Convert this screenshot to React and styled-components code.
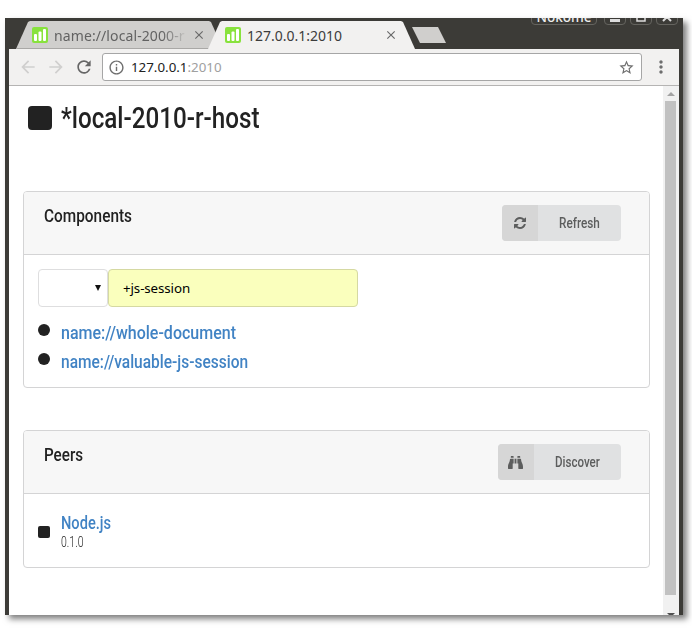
import React from 'react';
import styled, { createGlobalStyle } from 'styled-components';
import { MdArrowBack, MdArrowForward, MdRefresh, MdInfoOutline, MdStarBorder, MdMoreVert, MdClose } from 'react-icons/md';
import { FaBinoculars } from 'react-icons/fa';

const GlobalStyle = createGlobalStyle`
  * { box-sizing: border-box; }
  body { margin: 0; background: #fff; overflow: hidden; }
`;

const Page = styled.div`
  width: 692px;
  height: 637px;
  padding: 18px 9px 22px 5px;
  font-family: Roboto, sans-serif;
  color: #222;
`;

const Window = styled.div`
  height: 597px;
  display: flex;
  flex-direction: column;
  background: #3c3b37;
  border: solid #3c3b37;
  border-width: 0 4px;
  box-shadow: 4px 4px 6px rgba(0, 0, 0, 0.5);
`;

const TitleBar = styled.div`
  height: 31px;
  flex: none;
  display: flex;
  align-items: flex-start;
  overflow: hidden;
`;

const Tab = styled.div`
  width: 207px;
  height: 28px;
  flex: none;
  margin: 3px 0 0 ${(p) => (p.$active ? '-15px' : '7px')};
  padding: 0 17px 0 ${(p) => (p.$active ? '17px' : '16px')};
  display: flex;
  align-items: center;
  background: ${(p) => (p.$active ? '#f2f1f0' : '#d0cfcd')};
  box-shadow: ${(p) => (p.$active ? 'none' : 'inset 0 -1px #a9a8a6')};
  clip-path: polygon(0 100%, 12px 1px, 14px 0, 193px 0, 195px 1px, 100% 100%);
  font: 14px 'Noto Sans', sans-serif;
  color: ${(p) => (p.$active ? '#3c3c3c' : '#626262')};
`;

const TabTitle = styled.span`
  width: 135px;
  margin-left: 6px;
  letter-spacing: ${(p) => p.$spacing || '0'};
  white-space: nowrap;
  mask-image: ${(p) => (p.$fade ? 'linear-gradient(90deg, #000 108px, transparent 134px)' : 'none')};
`;

const CloseIcon = styled(MdClose)`
  flex: none;
  width: 14px;
  height: 14px;
  margin-left: auto;
  color: #6a6a6a;
`;

const NewTab = styled.div`
  width: 34px;
  height: 16px;
  margin: 9px 0 0 -3px;
  background: #d0cfcd;
  clip-path: polygon(0 0, 26px 0, 100% 100%, 8px 100%);
`;

const Controls = styled.div`
  margin-left: auto;
  display: flex;
  gap: 4px;
  padding-right: 1px;
`;

const Control = styled.div`
  width: ${(p) => p.$w || 22}px;
  margin-right: ${(p) => (p.$w ? 3 : 0)}px;
  height: 20px;
  margin-top: -13px;
  display: flex;
  justify-content: center;
  align-items: flex-end;
  border: 1px solid #65645f;
  border-radius: 4px;
  color: #eee;
  font: 500 13.5px/13px 'Noto Sans', sans-serif;
`;

const Toolbar = styled.div`
  height: 37px;
  flex: none;
  display: flex;
  align-items: center;
  background: #f2f1f0;
  border-bottom: 1px solid #b5b4b3;
  padding: 0 8px 0 9px;
  svg { flex: none; }
`;

const NavIcon = styled.span`
  display: flex;
  width: 20px;
  margin-right: 8px;
  color: ${(p) => (p.$disabled ? '#d0cfce' : '#666')};
`;

const AddressBar = styled.div`
  width: 540px;
  height: 28px;
  display: flex;
  align-items: center;
  padding: 0 6px 0 5px;
  background: #fff;
  border: 1px solid #a6a6a6;
  border-radius: 3px;
  color: #6e6e6e;
  font: 13.33px 'Noto Sans', sans-serif;
`;

const Url = styled.span`
  flex: 1;
  margin-left: 6px;
  color: #a0a0a0;
  b { font-weight: 400; color: #222; }
`;

const MenuIcon = styled(MdMoreVert)`
  width: 20px;
  height: 20px;
  margin-left: 9px;
  color: #6e6e6e;
`;

const Viewport = styled.div`
  flex: 1;
  min-height: 0;
  display: flex;
  background: #fff;
`;

const Content = styled.main`
  flex: 1;
  padding: 19px 13px 0 14px;
`;

const Scrollbar = styled.div`
  width: 16px;
  display: flex;
  flex-direction: column;
  align-items: center;
  background: #f1f1f1;
  overflow: hidden;
`;

const Arrow = styled.div`
  flex: none;
  width: 8px;
  height: 4px;
  margin: ${(p) => (p.$down ? '18px 0 0' : '6px 0 5px')};
  background: ${(p) => (p.$down ? '#505050' : '#a3a3a3')};
  clip-path: ${(p) => (p.$down ? 'polygon(0 0, 100% 0, 50% 100%)' : 'polygon(50% 0, 100% 100%, 0 100%)')};
`;

const Thumb = styled.div`
  flex: none;
  width: 11px;
  height: 494px;
  margin-right: 1px;
  background: #c1c1c1;
`;

const Narrow = styled.span`
  display: inline-block;
  white-space: nowrap;
  transform-origin: 0 50%;
  transform: scaleX(${(p) => p.$scale});
`;

const Heading = styled.h1`
  height: 26px;
  margin: 0 0 60px 5px;
  display: flex;
  align-items: center;
  gap: 9px;
  font-size: 29px;
  font-weight: 500;
  line-height: 26px;
`;

const Square = styled.i`
  flex: none;
  width: ${(p) => p.$size}px;
  height: ${(p) => p.$size}px;
  border-radius: ${(p) => (p.$round ? '50%' : p.$size > 20 ? '4px' : '2px')};
  background: #222;
`;

const Card = styled.section`
  height: ${(p) => p.$height}px;
  margin-bottom: 42px;
  border: 1px solid #d4d4d5;
  border-radius: 4px;
`;

const CardHeader = styled.header`
  height: 63px;
  display: flex;
  justify-content: space-between;
  align-items: flex-start;
  padding: 13px 28px 0 20px;
  background: #f7f7f7;
  border-bottom: 1px solid #d4d4d5;
  border-radius: 3px 3px 0 0;
`;

const CardTitle = styled.h2`
  margin: 0;
  font-size: 19px;
  font-weight: 500;
  line-height: 22px;
`;

const Button = styled.button`
  width: ${(p) => p.$width}px;
  height: 36px;
  padding: 0;
  display: flex;
  overflow: hidden;
  border: 0;
  border-radius: 4px;
  background: #e0e1e2;
  color: #5c5d5d;
  font: 500 15px/36px Roboto, sans-serif;
`;

const ButtonIcon = styled.span`
  width: 36px;
  height: 36px;
  flex: none;
  margin-right: 21px;
  padding-right: 1px;
  display: flex;
  align-items: center;
  justify-content: center;
  background: #d6d6d6;
`;

const CardBody = styled.div`
  padding: 14px;
`;

const Filters = styled.div`
  display: flex;
  margin-bottom: 11px;
`;

const Select = styled.div`
  width: 70px;
  height: 38px;
  padding-right: 5px;
  display: flex;
  align-items: center;
  justify-content: flex-end;
  border: 1px solid #dededf;
  border-radius: 4px;
`;

const Query = styled.div`
  width: 250px;
  height: 38px;
  padding-left: 14px;
  border: 1px solid #d5d9a2;
  border-radius: 4px;
  background: #faffbd;
  color: #000;
  font: 13.33px/37px 'Noto Sans', sans-serif;
  letter-spacing: -0.1px;
`;

const Item = styled.div`
  height: 29px;
  display: flex;
  align-items: center;
  gap: 11px;
  i { margin-bottom: 6px; }
`;

const Link = styled.a`
  color: #4183c4;
  font-size: 18.5px;
  font-weight: 500;
  line-height: 22px;
`;

const Peer = styled.div`
  display: flex;
  align-items: center;
  gap: 11px;
  padding-top: 4px;
  i { margin-top: 3px; }
`;

const PeerText = styled.div`
  height: 37px;
  display: flex;
  flex-direction: column;
`;

const Version = styled.span`
  font-size: 15px;
  font-weight: 300;
  line-height: 16px;
`;

const Favicon = () => (
  <svg width="16" height="16" viewBox="0 0 16 16">
    <rect width="16" height="16" rx="2" fill="#88e23d" />
    <rect x="2" y="7" width="3" height="7" rx="1" fill="#fff" />
    <rect x="6.5" y="4.5" width="3" height="9.5" rx="1" fill="#fff" />
    <rect x="11" y="2" width="3" height="12" rx="1" fill="#fff" />
  </svg>
);

const RefreshIcon = () => (
  <svg width="12" height="12" viewBox="0 0 1536 1536" fill="currentColor">
    <path d="M1511 928q0 5-1 7-64 268-268 434.500t-478 166.500q-146 0-282.500-55t-243.500-157l-129 129q-19 19-45 19t-45-19-19-45v-448q0-26 19-45t45-19h448q26 0 45 19t19 45-19 45l-137 137q71 66 161 102t187 36q134 0 250-65t186-179q11-17 53-117 8-23 30-23h192q13 0 22.500 9.500t9.500 22.500zm25-800v448q0 26-19 45t-45 19h-448q-26 0-45-19t-19-45 19-45l138-138q-148-137-349-137-134 0-250 65t-186 179q-11 17-53 117-8 23-30 23h-199q-13 0-22.500-9.500t-9.500-22.500v-7q65-268 270-434.500t480-166.500q146 0 284 55.500t245 156.500l130-129q19-19 45-19t45 19 19 45z" />
  </svg>
);

export default function App() {
  return (
    <Page>
      <GlobalStyle />
      <Window>
        <TitleBar>
          <Tab>
            <Favicon />
            <TabTitle $fade $spacing="0.1px">name://local-2000-r</TabTitle>
            <CloseIcon />
          </Tab>
          <Tab $active>
            <Favicon />
            <TabTitle>127.0.0.1:2010</TabTitle>
            <CloseIcon />
          </Tab>
          <NewTab />
          <Controls>
            <Control $w={66}>Nokome</Control>
            <Control>
              <svg width="10" height="16"><rect y="11" width="10" height="3" fill="#ddd" /></svg>
            </Control>
            <Control>
              <svg width="10" height="16"><rect x="1" y="5" width="8" height="8" fill="none" stroke="#ddd" strokeWidth="1.5" /></svg>
            </Control>
            <Control>
              <svg width="10" height="16"><path d="M1 5L9 13M9 5L1 13" stroke="#ddd" strokeWidth="2" /></svg>
            </Control>
          </Controls>
        </TitleBar>
        <Toolbar>
          <NavIcon $disabled><MdArrowBack size={20} /></NavIcon>
          <NavIcon $disabled><MdArrowForward size={20} /></NavIcon>
          <NavIcon><MdRefresh size={20} /></NavIcon>
          <AddressBar>
            <MdInfoOutline size={17} />
            <Url><b>127.0.0.1</b>:2010</Url>
            <MdStarBorder size={17} />
          </AddressBar>
          <MenuIcon />
        </Toolbar>
        <Viewport>
          <Content>
            <Heading>
              <Square $size={24} />
              <Narrow $scale={0.835}>*local-2010-r-host</Narrow>
            </Heading>
            <Card $height={197}>
              <CardHeader>
                <CardTitle><Narrow $scale={0.81}>Components</Narrow></CardTitle>
                <Button $width={119}>
                  <ButtonIcon><RefreshIcon /></ButtonIcon>
                  <Narrow $scale={0.785}>Refresh</Narrow>
                </Button>
              </CardHeader>
              <CardBody>
                <Filters>
                  <Select>
                    <svg width="7" height="8"><path d="M0 1H6L3 7Z" fill="#111" /></svg>
                  </Select>
                  <Query>+js-session</Query>
                </Filters>
                <Item><Square $size={12} $round /><Link><Narrow $scale={0.865}>name://whole-document</Narrow></Link></Item>
                <Item><Square $size={12} $round /><Link><Narrow $scale={0.838}>name://valuable-js-session</Narrow></Link></Item>
              </CardBody>
            </Card>
            <Card $height={138}>
              <CardHeader>
                <CardTitle><Narrow $scale={0.8}>Peers</Narrow></CardTitle>
                <Button $width={123}>
                  <ButtonIcon><FaBinoculars size={15} /></ButtonIcon>
                  <Narrow $scale={0.77}>Discover</Narrow>
                </Button>
              </CardHeader>
              <CardBody>
                <Peer>
                  <Square $size={12} />
                  <PeerText>
                    <Link><Narrow $scale={0.79}>Node.js</Narrow></Link>
                    <Version><Narrow $scale={0.7}>0.1.0</Narrow></Version>
                  </PeerText>
                </Peer>
              </CardBody>
            </Card>
          </Content>
          <Scrollbar>
            <Arrow />
            <Thumb />
            <Arrow $down />
          </Scrollbar>
        </Viewport>
      </Window>
    </Page>
  );
}
